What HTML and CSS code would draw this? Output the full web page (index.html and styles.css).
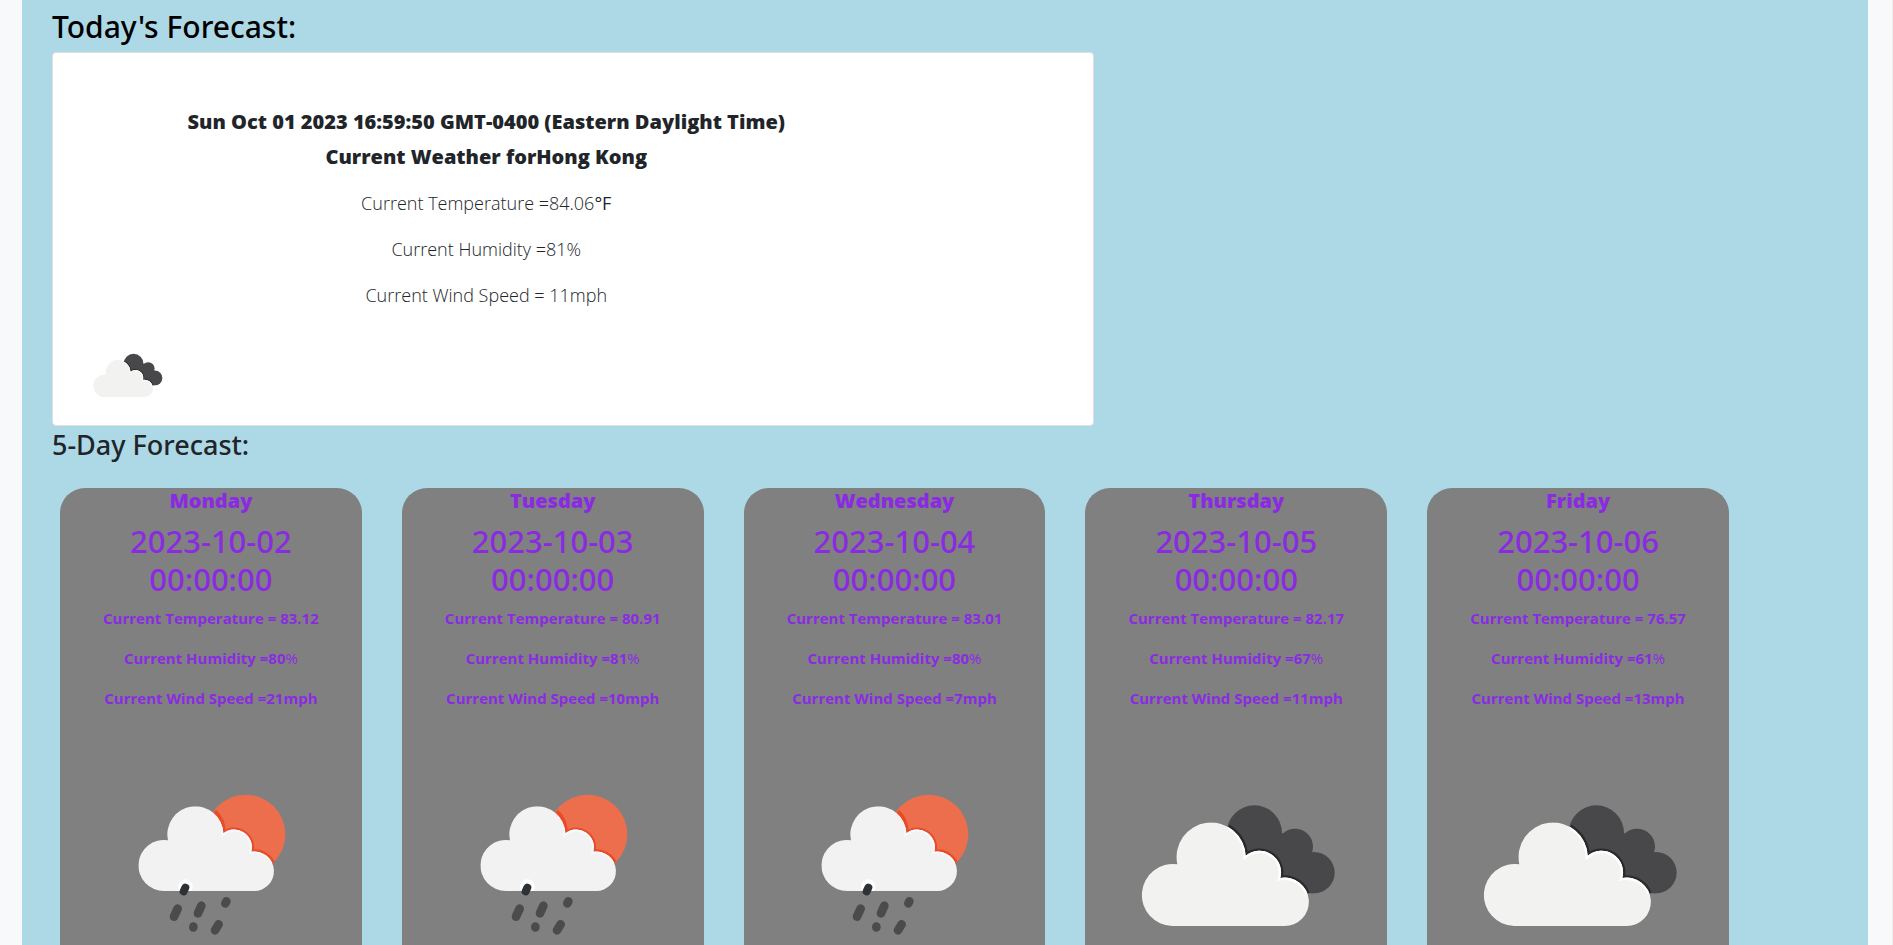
FILE: index.html
```html
<!DOCTYPE html>
<html lang="en">
<head>
<meta charset="utf-8">
<title>Weather Forecast</title>
<link rel="stylesheet" href="styles.css">
</head>
<body>
<svg class="sprite" aria-hidden="true">
  <clipPath id="clouds-front">
    <path d="M157 468A93 93 0 1 1 172 283A103.7 103.7 0 1 1 377 257A65 65 0 0 1 481 324A72.6 72.6 0 1 1 492 468Z"/>
  </clipPath>
  <clipPath id="rain-front">
    <path d="M163 363A76.5 76.5 0 1 1 174 211A84 84 0 1 1 340 190A53 53 0 0 1 424 245A59.3 59.3 0 1 1 432 363Z"/>
  </clipPath>
  <symbol id="clouds" viewBox="-12 0 720 525">
    <g fill="#48484a">
      <circle cx="403" cy="189" r="83"/>
      <circle cx="525" cy="230" r="54"/>
      <circle cx="582" cy="308" r="62"/>
      <path d="M403 187L487 190L525 230L578 247L582 370H400Z"/>
    </g>
    <path d="M325 170A104 104 0 0 1 377 257A65 65 0 0 1 481 324A73 73 0 0 1 562 370" fill="none" stroke="#2a2a2c" stroke-width="14"/>
    <g clip-path="url(#clouds-front)">
      <path d="M0 100H640V480H0Z" fill="#f2f2f0"/>
      <path d="M325 170A104 104 0 0 1 377 257A65 65 0 0 1 481 324A73 73 0 0 1 562 370" fill="none" stroke="#fff" stroke-width="14"/>
    </g>
  </symbol>
  <symbol id="rain" viewBox="-57 0 720 525">
    <circle cx="407" cy="193" r="119" fill="#ec6e4c"/>
    <path d="M314 124A84 84 0 0 1 340 190A53 53 0 0 1 424 245A60 60 0 0 1 488 278" fill="none" stroke="#e94b29" stroke-width="13"/>
    <g clip-path="url(#rain-front)">
      <path d="M60 80H520V380H60Z" fill="#f2f2f2"/>
      <path d="M314 124A84 84 0 0 1 340 190A53 53 0 0 1 424 245A60 60 0 0 1 488 278" fill="none" stroke="#f4fafe" stroke-width="12"/>
      <circle cx="226" cy="350" r="22" fill="#fff"/>
    </g>
    <g fill="none" stroke="#4b4b4d" stroke-width="26" stroke-linecap="round">
      <path d="M226 353L221 364" stroke="#2f3234" stroke-width="24"/>
      <path d="M203 416L192 440M274 407L264 430M349 394L346 400M250 470V472M326 463L315 481"/>
    </g>
  </symbol>
</svg>
<main class="forecast">
  <h2 class="today-title">Today's Forecast:</h2>
  <section class="today">
    <div class="today-text">
      <h3 class="today-heading">Sun Oct 01 2023 16:59:50 GMT-0400 (Eastern Daylight Time)</h3>
      <h3 class="today-heading">Current Weather forHong Kong</h3>
      <p class="reading">Current Temperature =84.06<span class="unit">°F</span></p>
      <p class="reading">Current Humidity =81%</p>
      <p class="reading">Current Wind Speed = 11mph</p>
    </div>
    <svg class="today-icon" role="img" aria-label="Broken clouds"><use href="#clouds"/></svg>
  </section>
  <h3 class="week-title">5-Day Forecast:</h3>
  <section class="week">
    <article class="day">
      <h4 class="day-name">Monday</h4>
      <p class="day-date">2023-10-02 00:00:00</p>
      <p class="detail">Current Temperature = 83.12</p>
      <p class="detail">Current Humidity =80<span class="percent">%</span></p>
      <p class="detail">Current Wind Speed =21mph</p>
      <svg class="day-icon" role="img" aria-label="Light rain"><use href="#rain"/></svg>
    </article>
    <article class="day">
      <h4 class="day-name">Tuesday</h4>
      <p class="day-date">2023-10-03 00:00:00</p>
      <p class="detail">Current Temperature = 80.91</p>
      <p class="detail">Current Humidity =81<span class="percent">%</span></p>
      <p class="detail">Current Wind Speed =10mph</p>
      <svg class="day-icon" role="img" aria-label="Light rain"><use href="#rain"/></svg>
    </article>
    <article class="day">
      <h4 class="day-name">Wednesday</h4>
      <p class="day-date">2023-10-04 00:00:00</p>
      <p class="detail">Current Temperature = 83.01</p>
      <p class="detail">Current Humidity =80<span class="percent">%</span></p>
      <p class="detail">Current Wind Speed =7mph</p>
      <svg class="day-icon" role="img" aria-label="Light rain"><use href="#rain"/></svg>
    </article>
    <article class="day">
      <h4 class="day-name">Thursday</h4>
      <p class="day-date">2023-10-05 00:00:00</p>
      <p class="detail">Current Temperature = 82.17</p>
      <p class="detail">Current Humidity =67<span class="percent">%</span></p>
      <p class="detail">Current Wind Speed =11mph</p>
      <svg class="day-icon" role="img" aria-label="Broken clouds"><use href="#clouds"/></svg>
    </article>
    <article class="day">
      <h4 class="day-name">Friday</h4>
      <p class="day-date">2023-10-06 00:00:00</p>
      <p class="detail">Current Temperature = 76.57</p>
      <p class="detail">Current Humidity =61<span class="percent">%</span></p>
      <p class="detail">Current Wind Speed =13mph</p>
      <svg class="day-icon" role="img" aria-label="Broken clouds"><use href="#clouds"/></svg>
    </article>
  </section>
</main>
</body>
</html>
```
FILE: styles.css
```css
* {
  box-sizing: border-box;
}

body {
  margin: 0;
  padding: 0 24px 0 22px;
  border-right: 1px solid #eeeeee;
  background: #f8f9fa;
  color: #212529;
  font-family: "Segoe UI", "Open Sans", "Noto Sans", sans-serif;
}

h2, h3, h4, p {
  margin: 0;
}

.sprite {
  position: absolute;
  width: 0;
  height: 0;
}

.forecast {
  padding: 8px 30px 0;
  background: #add8e6;
}

.today-title,
.week-title,
.day-date {
  font-family: "Segoe UI", "Noto Sans", "Open Sans", sans-serif;
  font-weight: 500;
  line-height: 38px;
}

.today-title {
  margin-bottom: 6px;
  color: #000;
  font-size: 30px;
}

.today {
  width: 58.333%;
  padding: 54px 0 21px;
  border: 1px solid #dfdfdf;
  border-radius: 4px;
  background: #fff;
}

.today-text {
  width: 83.333%;
  text-align: center;
}

.today-heading {
  margin-bottom: 5px;
  font-size: 20px;
  font-weight: 800;
  line-height: 30px;
}

.reading {
  margin: 16px 0;
  font-size: 18px;
  font-weight: 300;
  line-height: 30px;
}

.unit {
  font-weight: 500;
}

.today-icon {
  display: block;
  width: 86px;
  height: 63px;
  margin: 31px 0 0 31px;
}

.week-title {
  margin-bottom: 24px;
  font-size: 27px;
}

.week {
  display: grid;
  grid-template-columns: repeat(5, 1fr);
  gap: 40px;
  padding: 0 109px 0 8px;
}

.day {
  border-radius: 25px 25px 0 0;
  background: #808080;
  color: #8a2be2;
  text-align: center;
}

.day-name {
  margin-bottom: 8px;
  font-size: 20px;
  font-weight: 800;
  line-height: 26px;
}

.day-date {
  max-width: 200px;
  margin: 0 auto 8px;
  font-size: 31px;
}

.detail {
  margin-bottom: 16px;
  font-size: 15px;
  font-weight: 700;
  line-height: 24px;
}

.percent {
  font-weight: 400;
}

.day-icon {
  display: block;
  width: 240px;
  height: 175px;
  margin: 60px auto 0;
}
```
